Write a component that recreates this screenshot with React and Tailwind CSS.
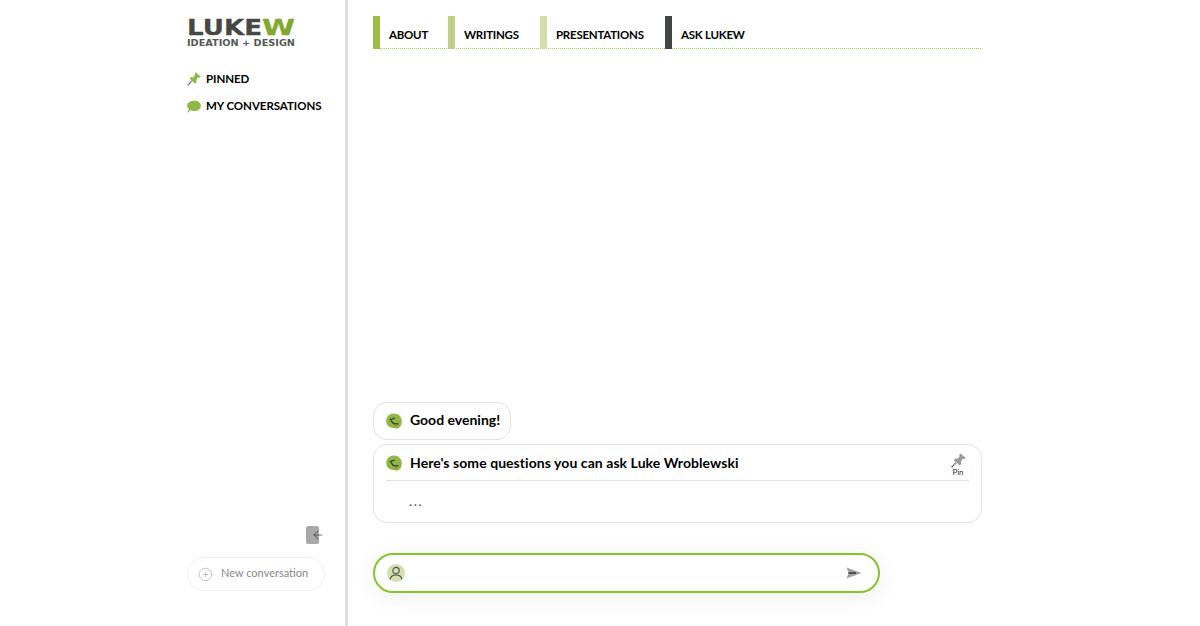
import { ArrowLeft, CirclePlus } from "lucide-react";

const font = "font-['Lato','Noto_Sans',sans-serif]";

const navItems = [
  { name: "ABOUT", bar: "bg-[#9fbc48]", width: "w-[75px]" },
  { name: "WRITINGS", bar: "bg-[#bfd088]", width: "w-[92px]" },
  { name: "PRESENTATIONS", bar: "bg-[#d0deaa]", width: "w-[125px]" },
  { name: "ASK LUKEW", bar: "bg-[#434644]", width: "w-[100px]" },
];

function PinIcon({ fill, className }) {
  return (
    <svg viewBox="0 0 16 16" className={className}>
      <path d="M0.8 15.2 L5.6 10" stroke="#444" strokeWidth="1.5" strokeDasharray="1.4 0.7" />
      <path
        d="M10 0.4 L15.8 5.4 L14 6.6 L12.4 6.2 L10.6 9.6 L11 12 L9 13 L3 7.4 L4.4 5.8 L7 6.2 L9.2 3.4 L8.8 1.8 Z"
        fill={fill}
      />
    </svg>
  );
}

function BubbleIcon({ className }) {
  return (
    <svg viewBox="0 0 16 14" className={className}>
      <path
        d="M8.4 0.4 C12.6 0.4 15.8 2.6 15.8 6.2 C15.8 10 12.6 12.2 8.4 12.2 C6.8 12.2 5.4 11.9 4.2 11.3 L0.8 13.4 L2.2 10 C0.9 9 0.2 7.7 0.2 6.2 C0.2 2.6 4.2 0.4 8.4 0.4 Z"
        fill="#8fb744"
      />
      <path d="M0.8 13.4 L2 12.6" stroke="#444" strokeWidth="1" />
    </svg>
  );
}

function BotIcon() {
  return (
    <svg viewBox="0 0 16 16" className="w-[16px] h-[16px] shrink-0">
      <path
        d="M8 0.4 C12.4 0.4 15.8 3.6 15.8 8 C15.8 12.4 13.8 15.6 10.6 15.6 C9.4 15.6 8.8 15 7.6 15 C3.4 15 0.2 12 0.2 7.8 C0.2 3.6 3.6 0.4 8 0.4 Z"
        fill="#8fb744"
      />
      <path d="M3.6 6.8 L8.8 5 M4.8 7.4 L7.6 10.6 L12.6 11" stroke="#27302a" strokeWidth="1.2" fill="none" />
      <circle cx="9.6" cy="12.6" r="1" fill="#d8583a" />
    </svg>
  );
}

function Logo() {
  return (
    <svg viewBox="0 0 108 29" className="w-[108px] h-[29px] block overflow-visible">
      <text
        x="0"
        y="17"
        fontFamily="'DejaVu Sans', sans-serif"
        fontWeight="700"
        fontSize="22"
        fill="#454845"
        stroke="#454845"
        strokeWidth="0.3"
        textLength="75"
        lengthAdjust="spacingAndGlyphs"
      >
        LUKE
      </text>
      <text
        x="75"
        y="17"
        fontFamily="'DejaVu Sans', sans-serif"
        fontWeight="700"
        fontSize="22"
        fill="#82a82f"
        stroke="#82a82f"
        strokeWidth="0.3"
        textLength="33"
        lengthAdjust="spacingAndGlyphs"
      >
        W
      </text>
      <text
        x="0"
        y="28"
        fontFamily="'DejaVu Sans', sans-serif"
        fontWeight="700"
        fontSize="9.5"
        fill="#555855"
        textLength="108"
        lengthAdjust="spacingAndGlyphs"
      >
        IDEATION + DESIGN
      </text>
    </svg>
  );
}

export default function App() {
  return (
    <div className={`${font} h-screen flex bg-white text-black overflow-hidden`}>
      {/* Sidebar */}
      <aside className="w-[348px] shrink-0 border-r-[3px] border-[#dcdfe4] pl-[187px] pr-[20px] pt-[18px] pb-[35px] flex flex-col">
        <Logo />
        <div className="mt-[23px] flex flex-col gap-[9px] text-[11.5px] font-bold tracking-[-0.05px] leading-[18px]">
          <div className="flex items-center gap-[5px] whitespace-nowrap">
            <PinIcon fill="#8fb744" className="w-[14px] h-[14px]" />
            <span>PINNED</span>
          </div>
          <div className="flex items-center gap-[5px] whitespace-nowrap">
            <BubbleIcon className="w-[14px] h-[13px]" />
            <span>MY CONVERSATIONS</span>
          </div>
        </div>
        <div className="mt-auto flex justify-end">
          <div className="relative w-[19px] h-[18px]">
            <div className="w-[13px] h-[18px] rounded-[2px] bg-[#a9a9a9]" />
            <ArrowLeft size={14} strokeWidth={1.2} color="#333" className="absolute left-[5px] top-[2px]" />
          </div>
        </div>
        <div className="mt-[13px] h-[34px] rounded-full border border-[#eff0f2] flex items-center pl-[10px] gap-[8px] text-[11px] text-[#888]">
          <CirclePlus size={15} strokeWidth={0.8} color="#8a8f99" />
          <span className="pb-[1px]">New conversation</span>
        </div>
      </aside>

      {/* Main */}
      <main className="w-[634px] pl-[25px] pt-[16px] pb-[33px] flex flex-col">
        <nav className="flex h-[33px] mr-[1px] border-b border-dotted border-[#a3cc62] text-[11.5px] font-bold tracking-[-0.25px]">
          {navItems.map((item) => (
            <div key={item.name} className={`flex ${item.width}`}>
              <div className={`w-[7px] h-[33px] ${item.bar}`} />
              <span className="pl-[9px] pt-[11px] leading-[16px] whitespace-nowrap">{item.name}</span>
            </div>
          ))}
        </nav>

        <div className="flex-1 flex flex-col justify-end gap-[4px]">
          <div className="self-start h-[38px] w-[138px] rounded-[14px] border border-[#e2e3e6] flex items-center pl-[12px] gap-[8px] text-[14px] font-bold">
            <BotIcon />
            <span className="pb-[3px]">Good evening!</span>
          </div>
          <div className="h-[79px] rounded-[14px] border border-[#e2e3e6] px-[12px] flex flex-col">
            <div className="h-[36px] shrink-0 pt-[1px] border-b border-[#e2e3e6] flex items-center gap-[8px] text-[14px] font-bold">
              <BotIcon />
              <span className="flex-1 pb-[1px] tracking-[0.06px]">Here's some questions you can ask Luke Wroblewski</span>
              <div className="flex flex-col items-center w-[26px] mr-[-2px] pt-[3px]">
                <PinIcon fill="#9b9b9b" className="w-[15px] h-[15px]" />
                <span className="text-[8px] leading-[9px] font-normal text-[#333]">Pin</span>
              </div>
            </div>
            <div className="pl-[23px] pt-[11px] text-[14px] leading-[18px] tracking-[1.5px] text-[#555]">...</div>
          </div>
        </div>

        <div className="mt-[30px] w-[507px] h-[40px] rounded-full border-2 border-[#86c52a] shadow-[0_4px_24px_rgba(0,0,0,0.07)] flex items-center justify-between pl-[12px] pr-[16px]">
          <div className="w-[18px] h-[18px] rounded-full bg-[#d3dfb0] overflow-hidden">
            <svg viewBox="0 0 18 18" className="w-full h-full" fill="none" stroke="#4a504c" strokeWidth="1.1">
              <circle cx="9" cy="6.6" r="3.2" />
              <path d="M2.8 16 C3.4 12.6 6 11 9 11 C12 11 14.6 12.6 15.2 16" />
            </svg>
          </div>
          <svg viewBox="0 0 16 12" className="w-[16px] h-[12px]">
            <path d="M0.6 0.4 L15.6 6 L0.6 11.6 L2.6 6 Z" fill="#a3a3a3" />
            <path d="M2.4 6 L10 6" stroke="#222" strokeWidth="1.3" />
          </svg>
        </div>
      </main>
    </div>
  );
}
